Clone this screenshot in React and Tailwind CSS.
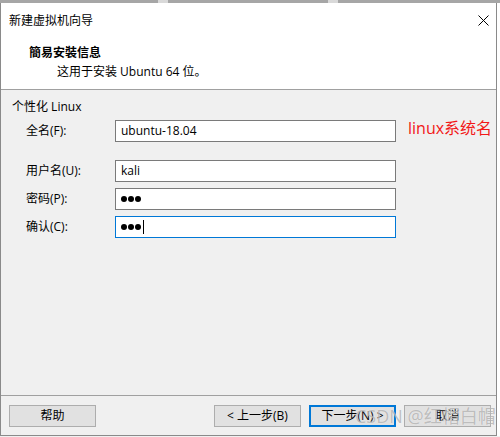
import React from "react";

const font = { fontFamily: '"Open Sans", "Noto Sans CJK SC", sans-serif' };

const Field = ({ label, children, focused, extra, first }) => (
  <div className={`flex items-center h-[22px] ${first ? "mt-[5px]" : ""}`}>
    <div className="w-[114px] pl-[25px] text-[12px] leading-[16px] text-black whitespace-nowrap">{label}</div>
    <div
      className={`w-[281px] h-[22px] bg-white border flex items-center pl-[5px] text-[12px] text-black ${
        focused ? "border-[#0078d7]" : "border-[#7a7a7a]"
      }`}
    >
      {children}
    </div>
    {extra}
  </div>
);

const Dots = ({ caret }) => (
  <div className="flex items-center gap-[1px]">
    <span className="w-[6px] h-[6px] rounded-full bg-black" />
    <span className="w-[6px] h-[6px] rounded-full bg-black" />
    <span className="w-[6px] h-[6px] rounded-full bg-black" />
    {caret && <span className="ml-[1px] w-[1px] h-[14px] bg-black" />}
  </div>
);

const Btn = ({ children, primary }) => (
  <div
    className={`w-[87px] h-[22px] flex items-center justify-center text-[12px] text-black bg-[#e1e1e1] ${
      primary ? "border-2 border-[#0078d7]" : "border border-[#adadad]"
    }`}
  >
    {children}
  </div>
);

export default function App() {
  return (
    <div style={font} className="relative w-[500px] h-[437px] bg-[#f0f0f0] overflow-hidden">
      {/* window above, peeking out */}
      <div className="flex h-[3px]">
        <div className="w-[158px] bg-[#a6a6a6]" />
        <div className="w-[10px] bg-[#d9d9d9]" />
        <div className="w-[160px] bg-[#a6a6a6]" />
        <div className="w-[10px] bg-[#d9d9d9]" />
        <div className="flex-1 bg-[#a6a6a6]" />
      </div>

      <div className="flex">
        <div className="w-[497px] h-[433px] flex flex-col border-l border-r border-b border-[#8a8a8a]">
          {/* header */}
          <div className="h-[87px] bg-white border-b border-[#a0a0a0] shrink-0">
            <div className="flex items-center justify-between pt-[8px] pl-[8px] pr-[7px] h-[27px]">
              <span className="text-[12px] leading-[16px] text-black">新建虚拟机向导</span>
              <svg width="11" height="11" viewBox="0 0 11 11">
                <path d="M0.5 0.5 L10.5 10.5 M10.5 0.5 L0.5 10.5" stroke="#000" strokeWidth="1" />
              </svg>
            </div>
            <div className="pl-[28px] mt-[15px] text-[12px] leading-[16px] font-bold text-black">簡易安裝信息</div>
            <div className="pl-[56px] mt-[3px] text-[12px] leading-[16px] text-black">这用于安装 Ubuntu 64 位。</div>
          </div>

          {/* body */}
          <div className="h-[305px] shrink-0 pt-[9px] pl-[11px]">
            <div className="text-[12px] leading-[16px] text-black">个性化 Linux</div>
            <div className="-ml-[11px]">
              <Field
                first
                label="全名(F):"
                extra={
                  <span className="ml-[12px] mb-[6px] text-[16px] leading-[20px] text-[#f21818] whitespace-nowrap">
                    linux系统名
                  </span>
                }
              >
                ubuntu-18.04
              </Field>
              <div className="mt-[18px]">
                <Field label="用户名(U):">kali</Field>
              </div>
              <div className="mt-[6px]">
                <Field label="密码(P):">
                  <Dots />
                </Field>
              </div>
              <div className="mt-[6px]">
                <Field label="确认(C):" focused>
                  <Dots caret />
                </Field>
              </div>
            </div>
          </div>

          {/* footer */}
          <div className="flex-1 border-t border-[#a0a0a0] flex justify-between pt-[9px] pl-[8px] pr-[5px]">
            <Btn>帮助</Btn>
            <div className="flex gap-[8px]">
              <Btn>&lt; 上一步(B)</Btn>
              <Btn primary>下一步(N) &gt;</Btn>
              <Btn>取消</Btn>
            </div>
          </div>
        </div>
        <div className="flex-1 bg-white" />
      </div>

      {/* watermark */}
      <div
        className="absolute left-[355px] top-[404px] text-[18px] leading-[24px] whitespace-nowrap text-[rgba(140,140,140,0.55)]"
        style={{ textShadow: "0 0 1px rgba(255,255,255,0.8)" }}
      >
        CSDN @红帽白帽
      </div>
    </div>
  );
}
